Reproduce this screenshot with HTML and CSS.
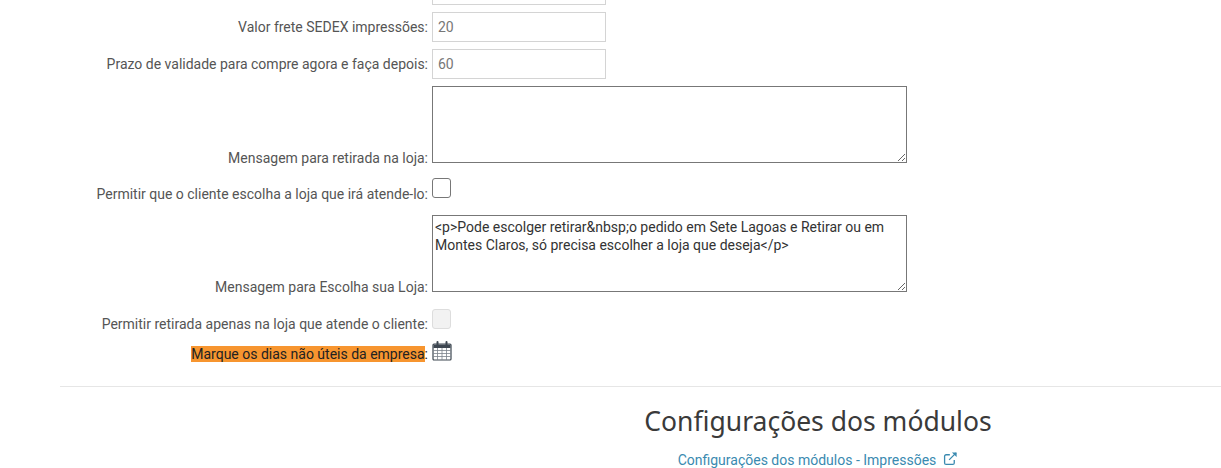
FILE: index.html
```html
<!DOCTYPE html>
<html lang="en">
<head>
    <meta charset="UTF-8">
    <link rel="stylesheet" href="styles.css">
    <title>Configurações</title>
</head>
<body>
    <form class="settings">
        <div class="row">
            <label class="label"></label>
            <input class="field" type="text" value="">
        </div>
        <div class="row">
            <label class="label">Valor frete SEDEX impressões:</label>
            <input class="field" type="text" value="20">
        </div>
        <div class="row">
            <label class="label">Prazo de validade para compre agora e faça depois:</label>
            <input class="field" type="text" value="60">
        </div>
        <div class="row row-area">
            <label class="label">Mensagem para retirada na loja:</label>
            <textarea class="area"></textarea>
        </div>
        <div class="row row-check">
            <label class="label">Permitir que o cliente escolha a loja que irá atende-lo:</label>
            <input class="check" type="checkbox">
        </div>
        <div class="row row-area">
            <label class="label">Mensagem para Escolha sua Loja:</label>
            <textarea class="area">&lt;p&gt;Pode escolger retirar&amp;nbsp;o pedido em Sete Lagoas e Retirar ou em Montes Claros, só precisa escolher a loja que deseja&lt;/p&gt;</textarea>
        </div>
        <div class="row row-check row-off">
            <label class="label">Permitir retirada apenas na loja que atende o cliente:</label>
            <input class="check check-off" type="checkbox" disabled>
        </div>
        <div class="row row-days">
            <label class="label"><mark class="mark">Marque os dias não úteis da empresa</mark>:</label>
            <svg class="calendar" viewBox="0 0 20 20" width="20" height="20" fill="none" stroke="#3d4650">
                <rect x="1" y="3" width="18" height="16" rx="1" stroke-width="1.2"/>
                <path d="M1 9.5h18M1 12.5h18M1 15.5h18M5.5 7v12M10 7v12M14.5 7v12" stroke="#7b838b" stroke-width="0.8"/>
                <path d="M1.5 7V3.5h17V7z" fill="#3d4650" stroke="none"/>
                <path d="M5.5 1v4M14.5 1v4" stroke-width="2" stroke-linecap="round"/>
            </svg>
        </div>
    </form>
    <hr class="divider">
    <section class="modules">
        <h2 class="modules-title">Configurações dos módulos</h2>
        <a class="modules-link" href="#">Configurações dos módulos - Impressões
            <svg class="external" viewBox="0 0 16 16" width="15" height="15" fill="none" stroke="currentColor" stroke-width="1.4">
                <path d="M12 9.5v3.2a1.6 1.6 0 0 1-1.6 1.6H3.3a1.6 1.6 0 0 1-1.6-1.6V5.6A1.6 1.6 0 0 1 3.3 4h4"/>
                <path d="M6.5 9.5 14 2"/>
                <path d="M9.5 1.5h5v5z" fill="currentColor" stroke="none"/>
            </svg>
        </a>
    </section>
</body>
</html>
```
FILE: styles.css
```css
body {
    margin: 0;
    height: 468px;
    overflow: hidden;
    background-color: #fff;
    font-family: Roboto, "Liberation Sans", sans-serif;
    font-size: 14px;
    color: #555;
}

.settings {
    display: flex;
    flex-direction: column;
    margin-top: -25px;
    gap: 7px;
}

.row {
    display: grid;
    grid-template-columns: 428px auto;
    column-gap: 4px;
    align-items: end;
    justify-content: start;
}

.label {
    text-align: right;
    line-height: 20px;
}

.row > .label {
    padding-bottom: 5px;
}

.row-area > .label,
.row-check > .label {
    padding-bottom: 0;
}

.field {
    box-sizing: border-box;
    width: 174px;
    height: 30px;
    padding: 0 5px;
    border: 1.5px solid #d4d4d4;
    background-color: #fff;
    font-family: inherit;
    font-size: 14px;
    color: #777;
}

.area {
    display: block;
    box-sizing: border-box;
    width: 475px;
    height: 77px;
    margin: 0 0 5px;
    padding: 2px 2px;
    border: 1.5px solid #777;
    background-color: #fff;
    font-family: inherit;
    font-size: 14px;
    line-height: 18px;
    color: #333;
}

.row-check {
    margin-top: 3px;
}

.row-off {
    margin-top: 5px;
}

.row-check + .row-area {
    margin-top: 4px;
}

.check {
    appearance: none;
    display: block;
    box-sizing: border-box;
    width: 19px;
    height: 20px;
    margin: 0 0 6px;
    border: 1px solid #777;
    border-radius: 3px;
    background-color: #fff;
}

.check-off {
    margin-bottom: 5px;
    border: 1px solid #ddd;
    background-color: #f2f2f2;
}

.row-days {
    margin-top: 0;
}

.row-days > .label {
    padding-bottom: 0;
    color: #222;
}

.mark {
    background-color: #f7952f;
    color: #222;
}

.calendar {
    display: block;
    margin-bottom: 3px;
}

.divider {
    margin: 22px 0 0 60px;
    border: 0;
    border-top: 1px solid #e6e6e6;
}

.modules {
    display: flex;
    flex-direction: column;
    align-items: center;
    margin-left: 415px;
}

.modules-title {
    margin: 14px 0 9px;
    font-family: "Noto Sans", sans-serif;
    font-size: 26.5px;
    font-weight: 400;
    line-height: 40px;
    color: #3a3a3a;
}

.modules-link {
    display: flex;
    align-items: center;
    gap: 7px;
    color: #3a8ab0;
    text-decoration: none;
    line-height: 20px;
}

.external {
    margin-top: -3px;
}
```
